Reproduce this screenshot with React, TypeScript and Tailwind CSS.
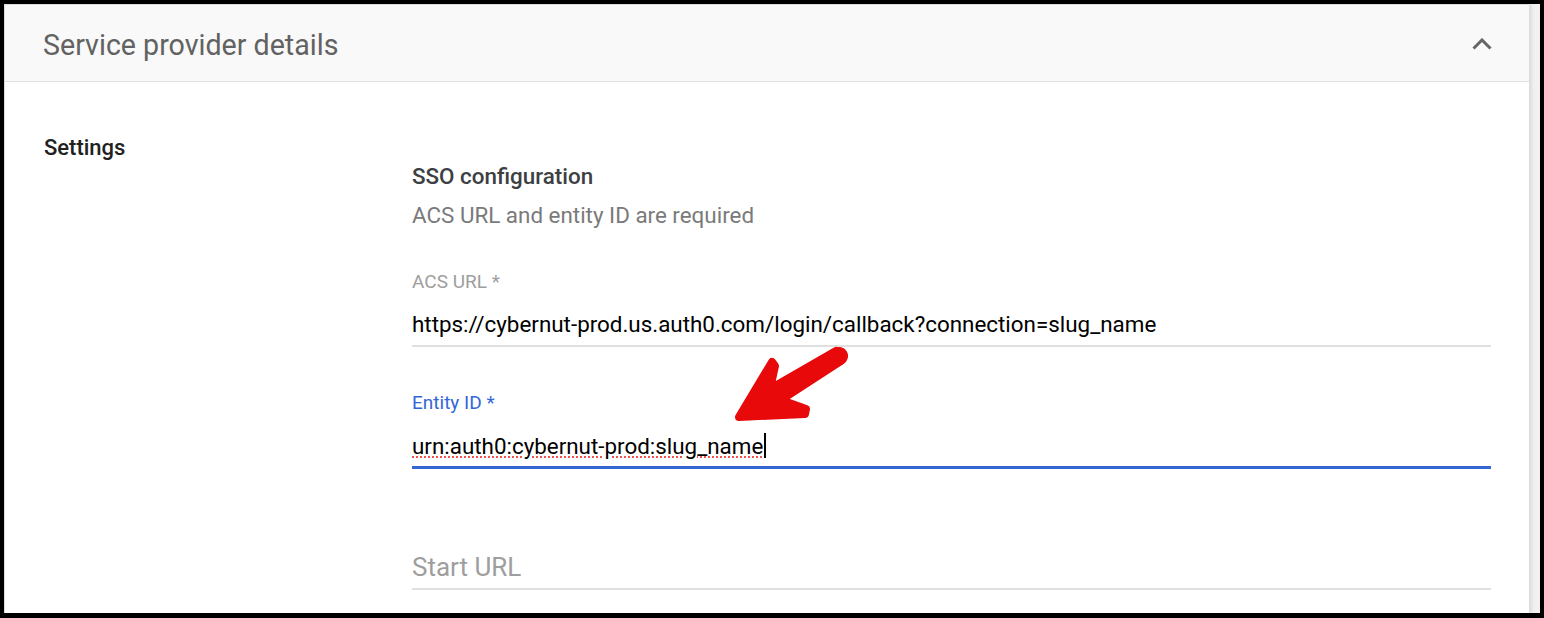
import { ReactNode } from "react";

function FieldLine({ focused }: { focused?: boolean }) {
  return focused ? (
    <div className="h-[3px] w-full bg-[#3367d6]" />
  ) : (
    <div className="h-[2px] w-full bg-[#e0e0e0]" />
  );
}

function Label({ children, focused }: { children: ReactNode; focused?: boolean }) {
  return (
    <div
      className={
        "text-[19px] leading-[20px] " +
        (focused ? "text-[#3367d6]" : "text-[#9e9e9e]")
      }
    >
      {children}
    </div>
  );
}

function PointerArrow() {
  return (
    <svg
      className="pointer-events-none absolute left-0 top-0"
      width="1544"
      height="618"
      viewBox="0 0 1544 618"
    >
      <path
        d="M739 417 L772 362 L775 366 L770 389 L836 351 L841 361 L781 400 L806 409 L805 414 Z"
        fill="#e8090b"
        stroke="#e8090b"
        strokeWidth="8"
        strokeLinejoin="round"
      />
      <line
        x1="774"
        y1="393"
        x2="839"
        y2="356"
        stroke="#e8090b"
        strokeWidth="18"
        strokeLinecap="round"
      />
    </svg>
  );
}

export default function App() {
  return (
    <div className="relative flex h-[618px] w-[1544px] flex-col overflow-hidden bg-black pb-[5px] pl-[4px] pr-[4px] pt-[4px] font-['Roboto',sans-serif]">
      <div className="flex flex-1 overflow-hidden bg-[#f1f1f1] pr-[10px]">
        <div className="flex flex-1 flex-col rounded-tr-[4px] border-l border-r border-t border-[#dcdcdc] bg-white shadow-[1px_0_4px_rgba(0,0,0,0.12)]">
          <div className="flex h-[77px] items-center justify-between border-b border-[#e0e0e0] bg-[#f9f9f9] pl-[38px] pr-[37px]">
            <span className="pt-[3px] text-[28.6px] leading-[30px] text-[#626262]">
              Service provider details
            </span>
            <svg width="20" height="12" viewBox="0 0 20 12" className="mt-[2px]">
              <path
                d="M1.5 10.5 L10 2 L18.5 10.5"
                fill="none"
                stroke="#666"
                strokeWidth="3"
              />
            </svg>
          </div>

          <div className="flex pl-[39px] pr-[38px] pt-[54px]">
            <div className="w-[368px] shrink-0 text-[22px] font-medium leading-[24px] text-[#212121]">
              Settings
            </div>

            <div className="flex flex-1 flex-col pt-[28px]">
              <div className="text-[22.4px] font-medium leading-[24px] text-[#3c4043]">
                SSO configuration
              </div>
              <div className="mt-[15px] text-[22.4px] leading-[24px] text-[#7a7a7a]">
                ACS URL and entity ID are required
              </div>

              <div className="mt-[45px]">
                <Label>ACS URL *</Label>
              </div>
              <div className="mt-[20px] text-[22.4px] leading-[24px] text-black">
                https://cybernut-prod.us.auth0.com/login/callback?connection=slug_name
              </div>
              <div className="mt-[9px]">
                <FieldLine />
              </div>

              <div className="mt-[46px]">
                <Label focused>Entity ID *</Label>
              </div>
              <div className="mt-[20px] flex items-center text-[22.4px] leading-[24px] text-black">
                <span className="underline decoration-[#ef5350] decoration-dotted decoration-2 underline-offset-[3px]">
                  urn:auth0:cybernut-prod:slug_name
                </span>
                <span className="ml-[1px] h-[25px] w-[2px] bg-black" />
              </div>
              <div className="mt-[8px]">
                <FieldLine focused />
              </div>

              <div className="mt-[84px] text-[26px] leading-[28px] text-[#9e9e9e]">
                Start URL
              </div>
              <div className="mt-[7px]">
                <FieldLine />
              </div>
            </div>
          </div>
        </div>
      </div>
      <PointerArrow />
    </div>
  );
}
